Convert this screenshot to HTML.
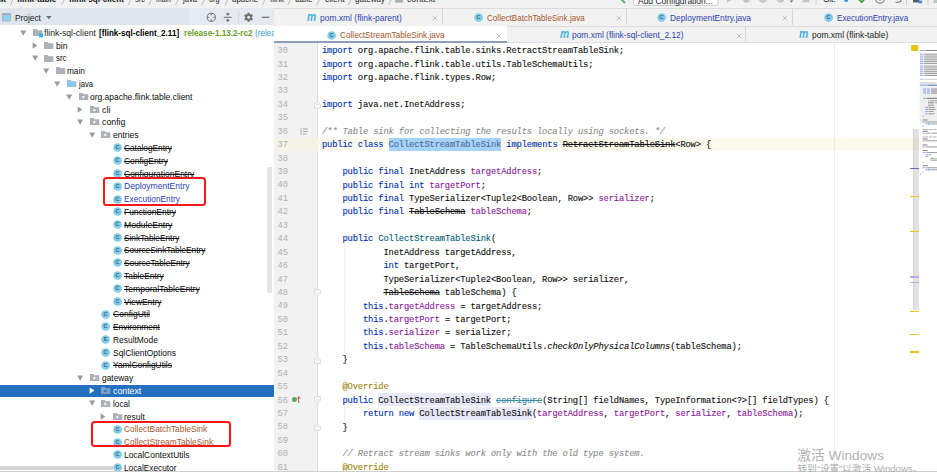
<!DOCTYPE html>
<html><head><meta charset="utf-8"><title>flink</title>
<style>
html,body{margin:0;padding:0}
body{width:937px;height:472px;overflow:hidden;position:relative;background:#fff;font-family:"Liberation Sans","Noto Sans CJK SC",sans-serif;font-size:9.6px;color:#1a1a1a}
.abs,.ic,.tl,.cl,.ln,.selrow,.curline{position:absolute}
.ic{overflow:visible}
#top{position:absolute;left:0;top:0;width:937px;height:8px;background:#f2f2f2;overflow:hidden}
#top .bc{position:absolute;top:-6.6px;font-size:9.4px;line-height:12px;white-space:nowrap;color:#262626;transform-origin:0 50%}
#top .bc.b{font-weight:bold;color:#111}
#phead{position:absolute;left:0;top:8.2px;width:274px;height:17.3px;background:#dfe4ed}
#tabs1{position:absolute;left:274px;top:8px;width:663px;height:17.5px;background:#f2f2f2;border-top:1px solid #dcdcdc;box-sizing:border-box}
#tabs2{position:absolute;left:274px;top:25.5px;width:663px;height:17.7px;background:#f2f2f2;border-top:1px solid #dcdcdc;border-bottom:1px solid #dedede;box-sizing:border-box}
.tab{position:absolute;white-space:nowrap;font-size:9px;line-height:12px;transform-origin:0 50%}
.tabm{position:absolute;font-size:12.6px;line-height:12px;font-style:italic;font-weight:bold;color:#3fb2e0;transform:scaleX(0.82);transform-origin:0 50%}
.tsep{position:absolute;width:1px;background:#d6d6d6}
.tx{position:absolute;font-size:9px;color:#b0b0b0;line-height:10px}
#tree{position:absolute;left:0;top:25.5px;width:274px;height:446.5px;background:#fff;overflow:hidden}
#treein{position:absolute;left:0;top:-25.5px;width:274px;height:472px}
.tl{white-space:nowrap;line-height:12.79px;height:12.79px;font-size:9px;color:#0c0c0c;transform:scaleX(0.947);transform-origin:0 50%}
.tl0{position:absolute;white-space:nowrap;line-height:12.79px;height:12.79px;font-size:9px;transform-origin:0 50%}
.tl.st{text-decoration:line-through;text-decoration-thickness:0.9px}
.tl.blue{color:#2a3fb8}
.tl.brown{color:#a8582a}
.tl.sel{color:#fff}
.tl b{font-weight:bold;color:#000}
.tl .rel{color:#6a9a2a;font-weight:bold}
.tl .relb{color:#3a9ad8}
.selrow{left:0;width:274px;background:#2470be}
#gutter{position:absolute;left:274px;top:43.2px;width:43.5px;height:428.8px;background:#f2f2f2;border-right:1px solid #dedede;box-sizing:border-box}
#editor{position:absolute;left:317.5px;top:43.2px;width:619.5px;height:428.8px;background:#fff}
.ln{left:277.6px;width:14px;margin-top:1.4px;font-family:"Liberation Mono",monospace;font-size:8.8px;letter-spacing:-0.16px;line-height:13.44px;color:#b0b0b0;white-space:pre}
.cl{left:322.0px;margin-top:1.5px;font-family:"Liberation Mono",monospace;font-size:8.8px;letter-spacing:-0.16px;-webkit-text-stroke:0.12px;line-height:13.44px;color:#111;white-space:pre;height:13.44px}
.cl .k{color:#0033b3}
.cl .f{color:#8e1a9c}
.cl .c{color:#8c8c8c;font-style:italic}
.cl .a{color:#9e880d}
.cl .m{color:#00627a}
.cl .s{text-decoration:line-through;text-decoration-thickness:0.65px}
.cl .hsel{color:#4f6f90}
.cl .hu{}
.hl{position:absolute}
.cl i{font-style:italic}
.curline{left:318px;width:601px;background:#fcfaed}
#wm1{position:absolute;left:797.3px;top:447.6px;font-size:13.7px;color:#b2b2b2;white-space:nowrap;line-height:16px}
#wm2{position:absolute;left:797.5px;top:462.6px;font-size:9.6px;color:#adadad;white-space:nowrap;line-height:12px}
</style></head><body>
<div id="top">
<span class="bc b" style="transform:scaleX(0.9854);left:-13.5px">flink</span>
<span class="bc b" style="transform:scaleX(0.8920);left:17.4px">flink-table</span>
<span class="bc b" style="transform:scaleX(0.8639);left:68.6px">flink-sql-client</span>
<span class="bc" style="transform:scaleX(0.8000);left:135.0px">src</span>
<span class="bc" style="transform:scaleX(0.7281);left:155.5px">main</span>
<span class="bc" style="transform:scaleX(0.8138);left:183.0px">java</span>
<span class="bc" style="transform:scaleX(0.7889);left:208.8px">org</span>
<span class="bc" style="transform:scaleX(0.8483);left:232.3px">apache</span>
<span class="bc" style="transform:scaleX(0.8397);left:270.0px">flink</span>
<span class="bc" style="transform:scaleX(0.8553);left:294.8px">table</span>
<span class="bc" style="transform:scaleX(0.8999);left:324.5px">client</span>
<span class="bc" style="transform:scaleX(0.8591);left:355.2px">gateway</span>
<span class="bc" style="transform:scaleX(0.9327);left:407.0px">context</span>
<svg class="ic" style="left:0;top:0" width="937" height="9" viewBox="0 0 937 9"><path d="M10.3 5 L13.3 -1" stroke="#b4b4b4" stroke-width="0.9" fill="none"/><path d="M61.6 5 L64.6 -1" stroke="#b4b4b4" stroke-width="0.9" fill="none"/><path d="M128.2 5 L131.2 -1" stroke="#b4b4b4" stroke-width="0.9" fill="none"/><path d="M148.8 5 L151.8 -1" stroke="#b4b4b4" stroke-width="0.9" fill="none"/><path d="M175.5 5 L178.5 -1" stroke="#b4b4b4" stroke-width="0.9" fill="none"/><path d="M201.8 5 L204.8 -1" stroke="#b4b4b4" stroke-width="0.9" fill="none"/><path d="M225.2 5 L228.2 -1" stroke="#b4b4b4" stroke-width="0.9" fill="none"/><path d="M262.3 5 L265.3 -1" stroke="#b4b4b4" stroke-width="0.9" fill="none"/><path d="M287.8 5 L290.8 -1" stroke="#b4b4b4" stroke-width="0.9" fill="none"/><path d="M316.8 5 L319.8 -1" stroke="#b4b4b4" stroke-width="0.9" fill="none"/><path d="M348.2 5 L351.2 -1" stroke="#b4b4b4" stroke-width="0.9" fill="none"/><path d="M388.6 5 L391.6 -1" stroke="#b4b4b4" stroke-width="0.9" fill="none"/><rect x="395" y="-2" width="8" height="4.6" fill="#aab1b8"/><path d="M621 -1 L625 3" stroke="#59a869" stroke-width="1.8"/><rect x="633.4" y="-8" width="84.6" height="13.4" rx="2" fill="#ffffff" stroke="#c4c4c4" stroke-width="0.9"/><path d="M727 -4 L732.5 -0.5 L727 2.6 Z" fill="#c2c2c2"/><ellipse cx="746.3" cy="-1" rx="3.4" ry="3.6" fill="#c2c2c2"/><path d="M759 -3 L767 -3 L767 1 L763 3.2 L759 1 Z" fill="#c8c8c8"/><circle cx="780.5" cy="-1.5" r="4.2" fill="#c8c8c8"/><path d="M789.5 0.4 H793.5 L791.5 2.6 Z" fill="#6e6e6e"/><rect x="802.6" y="-4" width="6.7" height="6.3" fill="#c6c6c6"/><path d="M816 -1 V5.2" stroke="#d0d0d0" stroke-width="1"/><path d="M844 -2 L848 -2 L848 1.8 L844.6 1.8 Z" fill="#3592e0"/><path d="M858.8 -0.6 L861.7 2.2 L864.8 -1.2" stroke="#4aa34a" stroke-width="1.8" fill="none"/><circle cx="880" cy="-1.2" r="4.4" fill="none" stroke="#6e6e6e" stroke-width="1.1"/><path d="M880 -3 V0.8" stroke="#6e6e6e" stroke-width="1"/><path d="M895.5 2.2 H898.5 Q901.4 2 901.4 -1.5" stroke="#6e6e6e" stroke-width="1.1" fill="none"/><path d="M906.5 -1 V5.2" stroke="#d0d0d0" stroke-width="1"/><rect x="913" y="-3" width="6.5" height="5.4" fill="#555b62"/><rect x="918.6" y="0.6" width="3.6" height="2.8" fill="#3592e0"/><path d="M928 -1 V5.2" stroke="#d0d0d0" stroke-width="1"/><rect x="933.5" y="-2" width="4" height="5" fill="#b8cbb8"/></svg>
<span class="bc" style="transform:scaleX(0.9026);left:638.4px;top:-4.8px;color:#222">Add Configuration...</span>
<span class="bc" style="transform:scaleX(0.8634);left:822.7px;top:-6.8px;color:#222">Git:</span>
</div>
<div id="phead"></div>
<div class="abs" style="left:189px;top:8.2px;width:85px;height:17.3px;background:#e5e9f1"></div>
<svg class="ic" style="left:2.1px;top:13.4px" width="9" height="9" viewBox="0 0 9 9"><rect x="0.4" y="0.4" width="8" height="7.6" fill="#8fd2f2" stroke="#a3adb8" stroke-width="0.8"/><rect x="0.4" y="0.4" width="8" height="1.8" fill="#a3adb8"/></svg>
<div class="abs" style="transform:scaleX(0.9245);transform-origin:0 50%;left:14.7px;top:11.8px;font-size:9px;line-height:12px;color:#1c1c1c;white-space:nowrap">Project</div>
<svg class="ic" style="left:46.1px;top:16.4px" width="6" height="4" viewBox="0 0 6 4"><path d="M0 0.1 H5.7 L2.85 3.3 Z" fill="#707070"/></svg>
<svg class="ic" style="left:0;top:0" width="280" height="30" viewBox="0 0 280 30">
 <circle cx="211.3" cy="17.3" r="4.1" fill="none" stroke="#6e6e6e" stroke-width="0.95"/>
 <path d="M211.3 13.2 V15.4 M211.3 19.2 V21.4 M207.2 17.3 H209.4 M213.2 17.3 H215.4" stroke="#6e6e6e" stroke-width="0.95"/>
 <path d="M223.8 17.3 H231.7" stroke="#6e6e6e" stroke-width="1"/>
 <path d="M225.7 13.5 H229.9 L227.8 15.8 Z M225.7 21.1 H229.9 L227.8 18.8 Z" fill="#6e6e6e"/>
 <path d="M227.8 12.6 V14 M227.8 20.6 V22" stroke="#6e6e6e" stroke-width="0.9"/>
 <path d="M238.7 11.2 V23.3" stroke="#cdd3dc" stroke-width="0.9"/>
 <rect x="247.45" y="12.80" width="2.3" height="9" rx="0.3" transform="rotate(0 248.6 17.3)" fill="#6e6e6e"/><rect x="247.45" y="12.80" width="2.3" height="9" rx="0.3" transform="rotate(60 248.6 17.3)" fill="#6e6e6e"/><rect x="247.45" y="12.80" width="2.3" height="9" rx="0.3" transform="rotate(120 248.6 17.3)" fill="#6e6e6e"/><circle cx="248.6" cy="17.3" r="3.2" fill="#6e6e6e"/><circle cx="248.6" cy="17.3" r="1.5" fill="#e5e9f1"/>
 <path d="M261.8 17.3 H269.4" stroke="#6e6e6e" stroke-width="1.2"/>
</svg>
<div id="tabs1"></div>
<div id="tabs2"></div>
<div class="abs" style="left:274px;top:26px;width:232.5px;height:15.5px;background:#fff"></div>
<div class="abs" style="left:274px;top:41.3px;width:232.5px;height:2px;background:#8c9dbe;z-index:3"></div>
<div class="tsep" style="left:442px;top:9px;height:16px"></div>
<div class="tsep" style="left:625.5px;top:9px;height:16px"></div>
<div class="tsep" style="left:791.5px;top:9px;height:16px"></div>
<div class="tsep" style="left:745px;top:26px;height:16px"></div>
<div class="tsep" style="left:273.4px;top:8px;height:464px;background:#e6e6e6"></div>

<span class="tabm" style="left:307.4px;top:11.0px">m</span><span class="tab" style="transform:scaleX(0.9399);left:319.7px;top:11.9px;color:#2b3fb0">pom.xml (flink-parent)</span>
<svg class="ic" style="left:432.0px;top:15.2px" width="6" height="6" viewBox="0 0 6 6"><path d="M0.6 0.6 L5.4 5.4 M5.4 0.6 L0.6 5.4" stroke="#b4b4b4" stroke-width="0.8"/></svg>
<svg class="ic" style="left:474.2px;top:12.4px" width="11" height="11" viewBox="0 0 11 11"><circle cx="4.6" cy="5.5" r="4.35" fill="#7fcdea"/><text x="4.6" y="7.45" font-size="5.6" font-weight="bold" text-anchor="middle" fill="#4a6472" font-family="Liberation Sans, sans-serif">C</text></svg><span class="tab" style="transform:scaleX(0.9009);left:486.7px;top:11.9px;color:#a5562a">CollectBatchTableSink.java</span>
<svg class="ic" style="left:615.7px;top:15.2px" width="6" height="6" viewBox="0 0 6 6"><path d="M0.6 0.6 L5.4 5.4 M5.4 0.6 L0.6 5.4" stroke="#b4b4b4" stroke-width="0.8"/></svg>
<svg class="ic" style="left:657.0px;top:12.4px" width="11" height="11" viewBox="0 0 11 11"><circle cx="4.6" cy="5.5" r="4.35" fill="#7fcdea"/><text x="4.6" y="7.45" font-size="5.6" font-weight="bold" text-anchor="middle" fill="#4a6472" font-family="Liberation Sans, sans-serif">C</text></svg><span class="tab" style="transform:scaleX(0.9270);left:670.0px;top:11.9px;color:#2b3fb0">DeploymentEntry.java</span>
<svg class="ic" style="left:782.0px;top:15.2px" width="6" height="6" viewBox="0 0 6 6"><path d="M0.6 0.6 L5.4 5.4 M5.4 0.6 L0.6 5.4" stroke="#b4b4b4" stroke-width="0.8"/></svg>
<svg class="ic" style="left:824.3px;top:12.4px" width="11" height="11" viewBox="0 0 11 11"><circle cx="4.6" cy="5.5" r="4.35" fill="#7fcdea"/><text x="4.6" y="7.45" font-size="5.6" font-weight="bold" text-anchor="middle" fill="#4a6472" font-family="Liberation Sans, sans-serif">C</text></svg><span class="tab" style="transform:scaleX(0.9027);left:837.4px;top:11.9px;color:#2b3fb0">ExecutionEntry.java</span>
<svg class="ic" style="left:327.4px;top:29.7px" width="11" height="11" viewBox="0 0 11 11"><circle cx="4.6" cy="5.5" r="4.35" fill="#7fcdea"/><text x="4.6" y="7.45" font-size="5.6" font-weight="bold" text-anchor="middle" fill="#4a6472" font-family="Liberation Sans, sans-serif">C</text></svg><span class="tab" style="transform:scaleX(0.9130);left:340.2px;top:29.2px;color:#a5562a">CollectStreamTableSink.java</span>
<svg class="ic" style="left:495.6px;top:32.5px" width="6" height="6" viewBox="0 0 6 6"><path d="M0.6 0.6 L5.4 5.4 M5.4 0.6 L0.6 5.4" stroke="#b4b4b4" stroke-width="0.8"/></svg>
<span class="tabm" style="left:559.5px;top:28.3px">m</span><span class="tab" style="transform:scaleX(0.9335);left:571.8px;top:29.2px;color:#2b3fb0">pom.xml (flink-sql-client_2.12)</span>
<svg class="ic" style="left:735.5px;top:32.5px" width="6" height="6" viewBox="0 0 6 6"><path d="M0.6 0.6 L5.4 5.4 M5.4 0.6 L0.6 5.4" stroke="#b4b4b4" stroke-width="0.8"/></svg>
<span class="tabm" style="left:799.0px;top:28.3px">m</span><span class="tab" style="transform:scaleX(0.9416);left:811.5px;top:29.2px;color:#222">pom.xml (flink-table)</span>


<div id="tree"><div id="treein">
<svg class="ic" style="left:20.1px;top:29.5px" width="7" height="7" viewBox="0 0 7 7"><path d="M0.2 0.6 H6.2 L3.2 5.8 Z" fill="#9a9a9a"/></svg>
<svg class="ic" style="left:33.0px;top:27.9px" width="12" height="11" viewBox="0 0 12 11"><path d="M0 1.1 H3.6 L4.6 2.2 H9.3 V7.9 H0 Z" fill="#aab1b8"/><rect x="6" y="5.4" width="4" height="4" fill="#35b3e8"/></svg>
<div class="tl0" style="transform:scaleX(0.9502);left:44.3px;top:26.91px;color:#1c1c1c">flink-sql-client</div>
<div class="tl0" style="transform:scaleX(0.8997);left:99.1px;top:26.91px;font-weight:bold;color:#000">[flink-sql-client_2.11]</div>
<div class="tl0" style="transform:scaleX(0.9079);left:183.7px;top:26.91px;font-weight:bold;color:#6a9c2c">release-1.13.2-rc2</div>
<div class="tl0" style="transform:scaleX(0.9047);left:254.7px;top:26.91px;color:#3a9ad8">(release-1.13.2-rc2)</div>
<svg class="ic" style="left:31.6px;top:41.9px" width="7" height="8" viewBox="0 0 7 8"><path d="M0.6 0.4 L5.4 3.6 L0.6 6.8 Z" fill="#9a9a9a"/></svg>
<svg class="ic" style="left:44.4px;top:40.7px" width="12" height="11" viewBox="0 0 12 11"><path d="M0 1.1 H3.6 L4.6 2.2 H9.3 V7.9 H0 Z" fill="#aab1b8"/></svg>
<div class="tl" style="transform:scaleX(0.9571);left:56.0px;top:39.70px">bin</div>
<svg class="ic" style="left:31.5px;top:55.1px" width="7" height="7" viewBox="0 0 7 7"><path d="M0.2 0.6 H6.2 L3.2 5.8 Z" fill="#9a9a9a"/></svg>
<svg class="ic" style="left:44.4px;top:53.5px" width="12" height="11" viewBox="0 0 12 11"><path d="M0 1.1 H3.6 L4.6 2.2 H9.3 V7.9 H0 Z" fill="#aab1b8"/></svg>
<div class="tl" style="transform:scaleX(0.8667);left:56.0px;top:52.49px">src</div>
<svg class="ic" style="left:42.9px;top:67.9px" width="7" height="7" viewBox="0 0 7 7"><path d="M0.2 0.6 H6.2 L3.2 5.8 Z" fill="#9a9a9a"/></svg>
<svg class="ic" style="left:55.8px;top:66.3px" width="12" height="11" viewBox="0 0 12 11"><path d="M0 1.1 H3.6 L4.6 2.2 H9.3 V7.9 H0 Z" fill="#aab1b8"/></svg>
<div class="tl" style="transform:scaleX(0.9121);left:67.4px;top:65.27px">main</div>
<svg class="ic" style="left:54.3px;top:80.7px" width="7" height="7" viewBox="0 0 7 7"><path d="M0.2 0.6 H6.2 L3.2 5.8 Z" fill="#9a9a9a"/></svg>
<svg class="ic" style="left:67.2px;top:79.1px" width="12" height="11" viewBox="0 0 12 11"><path d="M0 1.1 H3.6 L4.6 2.2 H9.3 V7.9 H0 Z" fill="#8fc4e6"/></svg>
<div class="tl" style="transform:scaleX(0.8537);left:78.8px;top:78.06px">java</div>
<svg class="ic" style="left:65.7px;top:93.5px" width="7" height="7" viewBox="0 0 7 7"><path d="M0.2 0.6 H6.2 L3.2 5.8 Z" fill="#9a9a9a"/></svg>
<svg class="ic" style="left:78.6px;top:91.9px" width="12" height="11" viewBox="0 0 12 11"><path d="M0 1.1 H3.6 L4.6 2.2 H9.3 V7.9 H0 Z" fill="#aab1b8"/><rect x="3.2" y="4" width="2.2" height="2.1" fill="#f4f5f6"/></svg>
<div class="tl" style="transform:scaleX(0.9388);left:90.2px;top:90.86px">org.apache.flink.table.client</div>
<svg class="ic" style="left:77.2px;top:105.8px" width="7" height="8" viewBox="0 0 7 8"><path d="M0.6 0.4 L5.4 3.6 L0.6 6.8 Z" fill="#9a9a9a"/></svg>
<svg class="ic" style="left:90.0px;top:104.6px" width="12" height="11" viewBox="0 0 12 11"><path d="M0 1.1 H3.6 L4.6 2.2 H9.3 V7.9 H0 Z" fill="#aab1b8"/><rect x="3.2" y="4" width="2.2" height="2.1" fill="#f4f5f6"/></svg>
<div class="tl" style="transform:scaleX(0.9882);left:101.6px;top:103.64px">cli</div>
<svg class="ic" style="left:77.1px;top:119.0px" width="7" height="7" viewBox="0 0 7 7"><path d="M0.2 0.6 H6.2 L3.2 5.8 Z" fill="#9a9a9a"/></svg>
<svg class="ic" style="left:90.0px;top:117.4px" width="12" height="11" viewBox="0 0 12 11"><path d="M0 1.1 H3.6 L4.6 2.2 H9.3 V7.9 H0 Z" fill="#aab1b8"/><rect x="3.2" y="4" width="2.2" height="2.1" fill="#f4f5f6"/></svg>
<div class="tl" style="transform:scaleX(0.9737);left:101.6px;top:116.44px">config</div>
<svg class="ic" style="left:88.5px;top:131.8px" width="7" height="7" viewBox="0 0 7 7"><path d="M0.2 0.6 H6.2 L3.2 5.8 Z" fill="#9a9a9a"/></svg>
<svg class="ic" style="left:101.4px;top:130.2px" width="12" height="11" viewBox="0 0 12 11"><path d="M0 1.1 H3.6 L4.6 2.2 H9.3 V7.9 H0 Z" fill="#aab1b8"/><rect x="3.2" y="4" width="2.2" height="2.1" fill="#f4f5f6"/></svg>
<div class="tl" style="transform:scaleX(0.9439);left:113.0px;top:129.22px">entries</div>
<svg class="ic" style="left:112.8px;top:142.3px" width="11" height="11" viewBox="0 0 11 11"><circle cx="4.6" cy="5.5" r="4.35" fill="#7fcdea"/><text x="4.6" y="7.45" font-size="5.6" font-weight="bold" text-anchor="middle" fill="#4a6472" font-family="Liberation Sans, sans-serif">C</text></svg>
<div class="tl st" style="transform:scaleX(0.9206);left:124.4px;top:142.01px">CatalogEntry</div>
<svg class="ic" style="left:112.8px;top:155.1px" width="11" height="11" viewBox="0 0 11 11"><circle cx="4.6" cy="5.5" r="4.35" fill="#7fcdea"/><text x="4.6" y="7.45" font-size="5.6" font-weight="bold" text-anchor="middle" fill="#4a6472" font-family="Liberation Sans, sans-serif">C</text></svg>
<div class="tl st" style="transform:scaleX(0.9334);left:124.4px;top:154.80px">ConfigEntry</div>
<svg class="ic" style="left:112.8px;top:167.9px" width="11" height="11" viewBox="0 0 11 11"><circle cx="4.6" cy="5.5" r="4.35" fill="#7fcdea"/><text x="4.6" y="7.45" font-size="5.6" font-weight="bold" text-anchor="middle" fill="#4a6472" font-family="Liberation Sans, sans-serif">C</text></svg>
<div class="tl st" style="transform:scaleX(0.9430);left:124.4px;top:167.59px">ConfigurationEntry</div>
<svg class="ic" style="left:112.8px;top:180.7px" width="11" height="11" viewBox="0 0 11 11"><circle cx="4.6" cy="5.5" r="4.35" fill="#7fcdea"/><text x="4.6" y="7.45" font-size="5.6" font-weight="bold" text-anchor="middle" fill="#4a6472" font-family="Liberation Sans, sans-serif">C</text></svg>
<div class="tl blue" style="transform:scaleX(0.9488);left:124.4px;top:180.38px">DeploymentEntry</div>
<svg class="ic" style="left:112.8px;top:193.5px" width="11" height="11" viewBox="0 0 11 11"><circle cx="4.6" cy="5.5" r="4.35" fill="#7fcdea"/><text x="4.6" y="7.45" font-size="5.6" font-weight="bold" text-anchor="middle" fill="#4a6472" font-family="Liberation Sans, sans-serif">C</text></svg>
<div class="tl blue" style="transform:scaleX(0.9251);left:124.4px;top:193.17px">ExecutionEntry</div>
<svg class="ic" style="left:112.8px;top:206.3px" width="11" height="11" viewBox="0 0 11 11"><circle cx="4.6" cy="5.5" r="4.35" fill="#7fcdea"/><text x="4.6" y="7.45" font-size="5.6" font-weight="bold" text-anchor="middle" fill="#4a6472" font-family="Liberation Sans, sans-serif">C</text></svg>
<div class="tl st" style="transform:scaleX(0.9364);left:124.4px;top:205.96px">FunctionEntry</div>
<svg class="ic" style="left:112.8px;top:219.1px" width="11" height="11" viewBox="0 0 11 11"><circle cx="4.6" cy="5.5" r="4.35" fill="#7fcdea"/><text x="4.6" y="7.45" font-size="5.6" font-weight="bold" text-anchor="middle" fill="#4a6472" font-family="Liberation Sans, sans-serif">C</text></svg>
<div class="tl st" style="transform:scaleX(0.9578);left:124.4px;top:218.75px">ModuleEntry</div>
<svg class="ic" style="left:112.8px;top:231.8px" width="11" height="11" viewBox="0 0 11 11"><circle cx="4.6" cy="5.5" r="4.35" fill="#7fcdea"/><text x="4.6" y="7.45" font-size="5.6" font-weight="bold" text-anchor="middle" fill="#4a6472" font-family="Liberation Sans, sans-serif">C</text></svg>
<div class="tl st" style="transform:scaleX(0.9212);left:124.4px;top:231.54px">SinkTableEntry</div>
<svg class="ic" style="left:112.8px;top:244.6px" width="11" height="11" viewBox="0 0 11 11"><circle cx="4.6" cy="5.5" r="4.35" fill="#7fcdea"/><text x="4.6" y="7.45" font-size="5.6" font-weight="bold" text-anchor="middle" fill="#4a6472" font-family="Liberation Sans, sans-serif">C</text></svg>
<div class="tl st" style="transform:scaleX(0.9193);left:124.4px;top:244.33px">SourceSinkTableEntry</div>
<svg class="ic" style="left:112.8px;top:257.4px" width="11" height="11" viewBox="0 0 11 11"><circle cx="4.6" cy="5.5" r="4.35" fill="#7fcdea"/><text x="4.6" y="7.45" font-size="5.6" font-weight="bold" text-anchor="middle" fill="#4a6472" font-family="Liberation Sans, sans-serif">C</text></svg>
<div class="tl st" style="transform:scaleX(0.9261);left:124.4px;top:257.12px">SourceTableEntry</div>
<svg class="ic" style="left:112.8px;top:270.2px" width="11" height="11" viewBox="0 0 11 11"><circle cx="4.6" cy="5.5" r="4.35" fill="#7fcdea"/><text x="4.6" y="7.45" font-size="5.6" font-weight="bold" text-anchor="middle" fill="#4a6472" font-family="Liberation Sans, sans-serif">C</text></svg>
<div class="tl st" style="transform:scaleX(0.9358);left:124.4px;top:269.92px">TableEntry</div>
<svg class="ic" style="left:112.8px;top:283.0px" width="11" height="11" viewBox="0 0 11 11"><circle cx="4.6" cy="5.5" r="4.35" fill="#7fcdea"/><text x="4.6" y="7.45" font-size="5.6" font-weight="bold" text-anchor="middle" fill="#4a6472" font-family="Liberation Sans, sans-serif">C</text></svg>
<div class="tl st" style="transform:scaleX(0.9516);left:124.4px;top:282.71px">TemporalTableEntry</div>
<svg class="ic" style="left:112.8px;top:295.8px" width="11" height="11" viewBox="0 0 11 11"><circle cx="4.6" cy="5.5" r="4.35" fill="#7fcdea"/><text x="4.6" y="7.45" font-size="5.6" font-weight="bold" text-anchor="middle" fill="#4a6472" font-family="Liberation Sans, sans-serif">C</text></svg>
<div class="tl st" style="transform:scaleX(0.9267);left:124.4px;top:295.50px">ViewEntry</div>
<svg class="ic" style="left:101.4px;top:308.6px" width="11" height="11" viewBox="0 0 11 11"><circle cx="4.6" cy="5.5" r="4.35" fill="#7fcdea"/><text x="4.6" y="7.45" font-size="5.6" font-weight="bold" text-anchor="middle" fill="#4a6472" font-family="Liberation Sans, sans-serif">C</text></svg>
<div class="tl st" style="transform:scaleX(0.9483);left:113.0px;top:308.29px">ConfigUtil</div>
<svg class="ic" style="left:101.4px;top:321.4px" width="11" height="11" viewBox="0 0 11 11"><circle cx="4.6" cy="5.5" r="4.35" fill="#7fcdea"/><text x="4.6" y="7.45" font-size="5.6" font-weight="bold" text-anchor="middle" fill="#4a6472" font-family="Liberation Sans, sans-serif">C</text></svg>
<div class="tl st" style="transform:scaleX(0.9281);left:113.0px;top:321.07px">Environment</div>
<svg class="ic" style="left:101.4px;top:334.2px" width="11" height="11" viewBox="0 0 11 11"><circle cx="4.6" cy="5.5" r="4.35" fill="#7fcdea"/><text x="4.6" y="7.45" font-size="5.6" font-weight="bold" text-anchor="middle" fill="#4a6472" font-family="Liberation Sans, sans-serif">E</text></svg>
<div class="tl" style="transform:scaleX(0.9348);left:113.0px;top:333.87px">ResultMode</div>
<svg class="ic" style="left:101.4px;top:346.9px" width="11" height="11" viewBox="0 0 11 11"><circle cx="4.6" cy="5.5" r="4.35" fill="#7fcdea"/><text x="4.6" y="7.45" font-size="5.6" font-weight="bold" text-anchor="middle" fill="#4a6472" font-family="Liberation Sans, sans-serif">C</text></svg>
<div class="tl" style="transform:scaleX(0.9381);left:113.0px;top:346.66px">SqlClientOptions</div>
<svg class="ic" style="left:101.4px;top:359.7px" width="11" height="11" viewBox="0 0 11 11"><circle cx="4.6" cy="5.5" r="4.35" fill="#7fcdea"/><text x="4.6" y="7.45" font-size="5.6" font-weight="bold" text-anchor="middle" fill="#4a6472" font-family="Liberation Sans, sans-serif">C</text></svg>
<div class="tl st" style="transform:scaleX(0.9296);left:113.0px;top:359.44px">YamlConfigUtils</div>
<svg class="ic" style="left:77.1px;top:374.8px" width="7" height="7" viewBox="0 0 7 7"><path d="M0.2 0.6 H6.2 L3.2 5.8 Z" fill="#9a9a9a"/></svg>
<svg class="ic" style="left:90.0px;top:373.2px" width="12" height="11" viewBox="0 0 12 11"><path d="M0 1.1 H3.6 L4.6 2.2 H9.3 V7.9 H0 Z" fill="#aab1b8"/><rect x="3.2" y="4" width="2.2" height="2.1" fill="#f4f5f6"/></svg>
<div class="tl" style="transform:scaleX(0.9305);left:101.6px;top:372.24px">gateway</div>
<div class="selrow" style="top:384.8px;height:12.2px"></div>
<svg class="ic" style="left:88.6px;top:387.2px" width="7" height="8" viewBox="0 0 7 8"><path d="M0.6 0.4 L5.4 3.6 L0.6 6.8 Z" fill="#ffffff"/></svg>
<svg class="ic" style="left:101.4px;top:386.0px" width="12" height="11" viewBox="0 0 12 11"><path d="M0 1.1 H3.6 L4.6 2.2 H9.3 V7.9 H0 Z" fill="#7f9fc4"/><rect x="3.2" y="4" width="2.2" height="2.1" fill="#2a74bd"/></svg>
<div class="tl sel" style="transform:scaleX(0.9748);left:113.0px;top:385.03px">context</div>
<svg class="ic" style="left:88.5px;top:400.4px" width="7" height="7" viewBox="0 0 7 7"><path d="M0.2 0.6 H6.2 L3.2 5.8 Z" fill="#9a9a9a"/></svg>
<svg class="ic" style="left:101.4px;top:398.8px" width="12" height="11" viewBox="0 0 12 11"><path d="M0 1.1 H3.6 L4.6 2.2 H9.3 V7.9 H0 Z" fill="#aab1b8"/><rect x="3.2" y="4" width="2.2" height="2.1" fill="#f4f5f6"/></svg>
<div class="tl" style="transform:scaleX(0.9127);left:113.0px;top:397.81px">local</div>
<svg class="ic" style="left:100.0px;top:412.8px" width="7" height="8" viewBox="0 0 7 8"><path d="M0.6 0.4 L5.4 3.6 L0.6 6.8 Z" fill="#9a9a9a"/></svg>
<svg class="ic" style="left:112.8px;top:411.6px" width="12" height="11" viewBox="0 0 12 11"><path d="M0 1.1 H3.6 L4.6 2.2 H9.3 V7.9 H0 Z" fill="#aab1b8"/><rect x="3.2" y="4" width="2.2" height="2.1" fill="#f4f5f6"/></svg>
<div class="tl" style="transform:scaleX(0.9448);left:124.4px;top:410.61px">result</div>
<svg class="ic" style="left:112.8px;top:423.7px" width="11" height="11" viewBox="0 0 11 11"><circle cx="4.6" cy="5.5" r="4.35" fill="#7fcdea"/><text x="4.6" y="7.45" font-size="5.6" font-weight="bold" text-anchor="middle" fill="#4a6472" font-family="Liberation Sans, sans-serif">C</text></svg>
<div class="tl brown" style="transform:scaleX(0.9290);left:124.4px;top:423.39px">CollectBatchTableSink</div>
<svg class="ic" style="left:112.8px;top:436.5px" width="11" height="11" viewBox="0 0 11 11"><circle cx="4.6" cy="5.5" r="4.35" fill="#7fcdea"/><text x="4.6" y="7.45" font-size="5.6" font-weight="bold" text-anchor="middle" fill="#4a6472" font-family="Liberation Sans, sans-serif">C</text></svg>
<div class="tl brown" style="transform:scaleX(0.9325);left:124.4px;top:436.19px">CollectStreamTableSink</div>
<svg class="ic" style="left:112.8px;top:449.3px" width="11" height="11" viewBox="0 0 11 11"><circle cx="4.6" cy="5.5" r="4.35" fill="#7fcdea"/><text x="4.6" y="7.45" font-size="5.6" font-weight="bold" text-anchor="middle" fill="#4a6472" font-family="Liberation Sans, sans-serif">C</text></svg>
<div class="tl" style="transform:scaleX(0.9353);left:124.4px;top:448.98px">LocalContextUtils</div>
<svg class="ic" style="left:112.8px;top:462.1px" width="11" height="11" viewBox="0 0 11 11"><circle cx="4.6" cy="5.5" r="4.35" fill="#7fcdea"/><text x="4.6" y="7.45" font-size="5.6" font-weight="bold" text-anchor="middle" fill="#4a6472" font-family="Liberation Sans, sans-serif">C</text></svg>
<div class="tl" style="transform:scaleX(0.9203);left:124.4px;top:461.76px">LocalExecutor</div>
<div class="abs" style="left:102.8px;top:176.9px;width:103.5px;height:28.9px;border:2px solid #f81818;border-radius:3.5px;box-sizing:border-box"></div>
<div class="abs" style="left:90.6px;top:421.1px;width:140.5px;height:25.6px;border:2px solid #f81818;border-radius:3.5px;box-sizing:border-box"></div>
<div class="abs" style="left:267.3px;top:167.2px;width:5px;height:126px;background:#e5e5e5"></div>
<div class="abs" style="left:0;top:465.5px;width:113px;height:4.5px;background:#d2d2d2"></div>
</div></div>

<div id="gutter"></div>
<div id="editor"></div>
<div class="ln" style="top:43.70px">30</div>
<div class="cl" style="top:43.70px"><span class="k">import</span> org.apache.flink.table.sinks.RetractStreamTableSink;</div>
<div class="ln" style="top:57.14px">31</div>
<div class="cl" style="top:57.14px"><span class="k">import</span> org.apache.flink.table.utils.TableSchemaUtils;</div>
<div class="ln" style="top:70.58px">32</div>
<div class="cl" style="top:70.58px"><span class="k">import</span> org.apache.flink.types.Row;</div>
<div class="ln" style="top:84.02px">33</div>
<div class="ln" style="top:97.46px">34</div>
<div class="cl" style="top:97.46px"><span class="k">import</span> java.net.InetAddress;</div>
<div class="ln" style="top:110.90px">35</div>
<div class="ln" style="top:124.34px">36</div>
<div class="cl" style="top:124.34px"><span class="c">/** Table sink for collecting the results locally using sockets. */</span></div>
<div class="curline" style="top:137.78px;height:13.44px"></div>
<div class="abs" style="left:274.5px;width:43px;background:#f6f4e9;top:137.78px;height:13.44px"></div>
<div class="hl" style="left:388.6px;top:138.08px;width:112.6px;height:13.04px;background:#a6d2ff"></div>
<div class="ln" style="top:137.78px">37</div>
<div class="cl" style="top:137.78px"><span class="k">public class</span> <span class="hsel">CollectStreamTableSink</span> <span class="k">implements</span> <span class="s">RetractStreamTableSink</span>&lt;Row&gt; {</div>
<div class="ln" style="top:151.22px">38</div>
<div class="ln" style="top:164.66px">39</div>
<div class="cl" style="top:164.66px">    <span class="k">public final</span> InetAddress <span class="f">targetAddress</span>;</div>
<div class="ln" style="top:178.10px">40</div>
<div class="cl" style="top:178.10px">    <span class="k">public final int</span> <span class="f">targetPort</span>;</div>
<div class="ln" style="top:191.54px">41</div>
<div class="cl" style="top:191.54px">    <span class="k">public final</span> TypeSerializer&lt;Tuple2&lt;Boolean, Row&gt;&gt; <span class="f">serializer</span>;</div>
<div class="ln" style="top:204.98px">42</div>
<div class="cl" style="top:204.98px">    <span class="k">public final</span> <span class="s">TableSchema</span> <span class="f">tableSchema</span>;</div>
<div class="ln" style="top:218.42px">43</div>
<div class="ln" style="top:231.86px">44</div>
<div class="cl" style="top:231.86px">    <span class="k">public</span> <span class="m">CollectStreamTableSink</span>(</div>
<div class="ln" style="top:245.30px">45</div>
<div class="cl" style="top:245.30px">            InetAddress targetAddress,</div>
<div class="ln" style="top:258.74px">46</div>
<div class="cl" style="top:258.74px">            <span class="k">int</span> targetPort,</div>
<div class="ln" style="top:272.18px">47</div>
<div class="cl" style="top:272.18px">            TypeSerializer&lt;Tuple2&lt;Boolean, Row&gt;&gt; serializer,</div>
<div class="ln" style="top:285.62px">48</div>
<div class="cl" style="top:285.62px">            <span class="s">TableSchema</span> tableSchema) {</div>
<div class="ln" style="top:299.06px">49</div>
<div class="cl" style="top:299.06px">        <span class="k">this</span>.<span class="f">targetAddress</span> = targetAddress;</div>
<div class="ln" style="top:312.50px">50</div>
<div class="cl" style="top:312.50px">        <span class="k">this</span>.<span class="f">targetPort</span> = targetPort;</div>
<div class="ln" style="top:325.94px">51</div>
<div class="cl" style="top:325.94px">        <span class="k">this</span>.<span class="f">serializer</span> = serializer;</div>
<div class="ln" style="top:339.38px">52</div>
<div class="cl" style="top:339.38px">        <span class="k">this</span>.<span class="f">tableSchema</span> = TableSchemaUtils.<i>checkOnlyPhysicalColumns</i>(tableSchema);</div>
<div class="ln" style="top:352.82px">53</div>
<div class="cl" style="top:352.82px">    }</div>
<div class="ln" style="top:366.26px">54</div>
<div class="ln" style="top:379.70px">55</div>
<div class="cl" style="top:379.70px">    <span class="a">@Override</span></div>
<div class="hl" style="left:378.3px;top:393.44px;width:112.6px;height:13.04px;background:#e8e8fb"></div>
<div class="ln" style="top:393.14px">56</div>
<div class="cl" style="top:393.14px">    <span class="k">public</span> <span class="hu">CollectStreamTableSink</span> <span class="m s" style="color:#3b8ea5">configure</span>(String[] fieldNames, TypeInformation&lt;?&gt;[] fieldTypes) {</div>
<div class="hl" style="left:419.3px;top:406.88px;width:112.6px;height:13.04px;background:#e8e8fb"></div>
<div class="ln" style="top:406.58px">57</div>
<div class="cl" style="top:406.58px">        <span class="k">return new</span> <span class="hu">CollectStreamTableSink</span>(<span class="f">targetAddress</span>, <span class="f">targetPort</span>, <span class="f">serializer</span>, <span class="f">tableSchema</span>);</div>
<div class="ln" style="top:420.02px">58</div>
<div class="cl" style="top:420.02px">    }</div>
<div class="ln" style="top:433.46px">59</div>
<div class="ln" style="top:446.90px">60</div>
<div class="cl" style="top:446.90px">    <span class="c">// Retract stream sinks work only with the old type system.</span></div>
<div class="ln" style="top:460.34px">61</div>
<div class="cl" style="top:460.34px">    <span class="a">@Override</span></div>
<svg class="ic" style="left:313.8px;top:100.6px" width="7" height="8" viewBox="0 0 7 7.5"><path d="M0.6 6.9 H6.4 V3.3 L3.5 0.6 L0.6 3.3 Z" fill="#fff" stroke="#cdcdcd" stroke-width="0.8"/><path d="M2.2 3.7 H4.8" stroke="#c0c0c0" stroke-width="0.7"/></svg>
<svg class="ic" style="left:313.8px;top:288.7px" width="7" height="8" viewBox="0 0 7 7.5"><path d="M0.6 0.6 H6.4 V4.2 L3.5 6.9 L0.6 4.2 Z" fill="#fff" stroke="#cdcdcd" stroke-width="0.8"/><path d="M2.2 3.7 H4.8" stroke="#c0c0c0" stroke-width="0.7"/></svg>
<svg class="ic" style="left:313.8px;top:355.9px" width="7" height="8" viewBox="0 0 7 7.5"><path d="M0.6 6.9 H6.4 V3.3 L3.5 0.6 L0.6 3.3 Z" fill="#fff" stroke="#cdcdcd" stroke-width="0.8"/><path d="M2.2 3.7 H4.8" stroke="#c0c0c0" stroke-width="0.7"/></svg>
<svg class="ic" style="left:313.8px;top:396.3px" width="7" height="8" viewBox="0 0 7 7.5"><path d="M0.6 0.6 H6.4 V4.2 L3.5 6.9 L0.6 4.2 Z" fill="#fff" stroke="#cdcdcd" stroke-width="0.8"/><path d="M2.2 3.7 H4.8" stroke="#c0c0c0" stroke-width="0.7"/></svg>
<svg class="ic" style="left:313.8px;top:423.1px" width="7" height="8" viewBox="0 0 7 7.5"><path d="M0.6 6.9 H6.4 V3.3 L3.5 0.6 L0.6 3.3 Z" fill="#fff" stroke="#cdcdcd" stroke-width="0.8"/><path d="M2.2 3.7 H4.8" stroke="#c0c0c0" stroke-width="0.7"/></svg>
<div class="abs" style="left:343.7px;top:245.3px;width:1px;height:107.5px;background:#ebebeb"></div>
<div class="abs" style="left:343.7px;top:406.6px;width:1px;height:13.4px;background:#ebebeb"></div>
<svg class="ic" style="left:300px;top:127.6px" width="9" height="7" viewBox="0 0 9 7"><path d="M1 0.5 V6.5 M3 1 H8 M3 3.5 H8 M3 6 H6.5" stroke="#9aa0a6" stroke-width="0.9" fill="none"/></svg>
<svg class="ic" style="left:291px;top:395.4px" width="10" height="9" viewBox="0 0 10 9"><circle cx="3.4" cy="4.6" r="2.5" fill="#5aa85a"/><path d="M7.6 8 V2.2 M6 3.6 L7.6 1.6 L9.2 3.6" stroke="#d0504a" stroke-width="1" fill="none"/></svg>
<div class="abs" style="left:833.5px;top:43.5px;width:1px;height:428.5px;background:#ebebeb"></div>
<div class="abs" style="left:911.4px;top:44.6px;width:6.6px;height:6.6px;background:#ebc216"></div>
<div class="abs" style="left:913.2px;top:128.7px;width:5.8px;height:181.3px;background:rgba(0,0,0,0.115);border-left:0.6px solid rgba(0,0,0,0.06);box-sizing:border-box"></div>
<div class="abs" style="left:910.2px;top:167.5px;width:8.8px;height:1.4px;background:#6a6ab4"></div>
<div class="abs" style="left:910.2px;top:196.1px;width:8.8px;height:1.4px;background:#ebc216"></div>
<div class="abs" style="left:910.2px;top:230.5px;width:8.8px;height:1.4px;background:#ebc216"></div>
<div class="abs" style="left:910.2px;top:276.4px;width:8.8px;height:1.3px;background:#c0a8ee"></div>
<div class="abs" style="left:910.2px;top:282.2px;width:8.8px;height:1.3px;background:#c0a8ee"></div>
<div class="abs" style="left:910.2px;top:310.7px;width:8.8px;height:1.4px;background:#ebc216"></div>
<div class="abs" style="left:910.2px;top:334.1px;width:8.8px;height:1.4px;background:#ebc216"></div>
<div class="abs" style="left:910.2px;top:351.3px;width:8.8px;height:1.4px;background:#ebc216"></div>
<svg class="ic" style="left:0;top:0" width="937" height="472" viewBox="0 0 937 472"><rect x="920" y="50.0" width="4" height="1.0" fill="#9db4ee"/><rect x="925.2" y="50.0" width="12" height="1.0" fill="#8a8a8a"/><rect x="920" y="53.6" width="3.4" height="1.2" fill="#9db4ee"/><rect x="924.2" y="53.6" width="13" height="1.2" fill="#a4a4a4"/><rect x="920" y="55.5" width="3.4" height="1.2" fill="#9db4ee"/><rect x="924.2" y="55.5" width="13" height="1.2" fill="#a4a4a4"/><rect x="920" y="57.3" width="3.4" height="1.2" fill="#9db4ee"/><rect x="924.2" y="57.3" width="13" height="1.2" fill="#a4a4a4"/><rect x="920" y="59.2" width="3.4" height="1.2" fill="#9db4ee"/><rect x="924.2" y="59.2" width="13" height="1.2" fill="#a4a4a4"/><rect x="920" y="61.0" width="3.4" height="1.2" fill="#9db4ee"/><rect x="924.2" y="61.0" width="13" height="1.2" fill="#a4a4a4"/><rect x="920" y="62.9" width="3.4" height="1.2" fill="#9db4ee"/><rect x="924.2" y="62.9" width="13" height="1.2" fill="#a4a4a4"/><rect x="920" y="65.5" width="3.4" height="1.2" fill="#9db4ee"/><rect x="924.2" y="65.5" width="13" height="1.2" fill="#a4a4a4"/><rect x="920" y="67.4" width="3.4" height="1.2" fill="#9db4ee"/><rect x="924.2" y="67.4" width="13" height="1.2" fill="#a4a4a4"/><rect x="920" y="69.2" width="3.4" height="1.2" fill="#9db4ee"/><rect x="924.2" y="69.2" width="13" height="1.2" fill="#a4a4a4"/><rect x="920" y="71.1" width="3.4" height="1.2" fill="#9db4ee"/><rect x="924.2" y="71.1" width="13" height="1.2" fill="#a4a4a4"/><rect x="920" y="72.9" width="3.4" height="1.2" fill="#9db4ee"/><rect x="924.2" y="72.9" width="13" height="1.2" fill="#a4a4a4"/><rect x="920" y="74.8" width="3.4" height="1.2" fill="#9db4ee"/><rect x="924.2" y="74.8" width="13" height="1.2" fill="#a4a4a4"/><rect x="920" y="78.8" width="3.8" height="0.8" fill="#9db4ee"/><rect x="924.6" y="78.8" width="12.4" height="0.8" fill="#b8b8b8"/><rect x="919.6" y="81.6" width="17.4" height="41.8" fill="#efefef"/><rect x="920.5" y="82.6" width="2" height="0.8" fill="#b0b0b0"/><rect x="923.5" y="82.6" width="2" height="0.8" fill="#b0b0b0"/><rect x="926.5" y="82.6" width="2" height="0.8" fill="#b0b0b0"/><rect x="929.5" y="82.6" width="6" height="0.8" fill="#c0c0c0"/><rect x="920" y="84.6" width="7.4" height="1.3" fill="#9db4ee"/><rect x="927.4" y="84.6" width="9.6" height="1.3" fill="#6f9cc4"/><rect x="923" y="88.4" width="3" height="1.4" fill="#9db4ee"/><rect x="927" y="88.4" width="3" height="1.4" fill="#9db4ee"/><rect x="931" y="88.4" width="6" height="1.4" fill="#a4a4a4"/><rect x="923" y="90.4" width="3" height="1.4" fill="#9db4ee"/><rect x="927" y="90.4" width="3" height="1.4" fill="#9db4ee"/><rect x="931" y="90.4" width="6" height="1.4" fill="#a4a4a4"/><rect x="923" y="92.4" width="3" height="1.4" fill="#9db4ee"/><rect x="927" y="92.4" width="3" height="1.4" fill="#9db4ee"/><rect x="931" y="92.4" width="6" height="1.4" fill="#a4a4a4"/><rect x="923" y="97.8" width="3" height="1.2" fill="#9db4ee"/><rect x="926.6" y="97.8" width="10.4" height="1.2" fill="#8a8a8a"/><rect x="928" y="100.2" width="1" height="1.1" fill="#9db4ee"/><rect x="929.6" y="100.2" width="7.4" height="1.1" fill="#a4a4a4"/><rect x="928" y="102.2" width="6" height="1.1" fill="#8a8a8a"/><rect x="935" y="102.2" width="2" height="1.1" fill="#a4a4a4"/><rect x="928" y="104.6" width="6" height="1.2" fill="#a4a4a4"/><rect x="925.2" y="106.8" width="3" height="1.2" fill="#9db4ee"/><rect x="928.6" y="106.8" width="6" height="1.2" fill="#a4a4a4"/><rect x="925.2" y="108.8" width="3" height="1.2" fill="#9db4ee"/><rect x="928.6" y="108.8" width="7" height="1.2" fill="#a4a4a4"/><rect x="925.2" y="110.8" width="3" height="1.2" fill="#9db4ee"/><rect x="928.6" y="110.8" width="5" height="1.2" fill="#a4a4a4"/><rect x="925.2" y="113.2" width="3" height="1.2" fill="#9db4ee"/><rect x="928.6" y="113.2" width="6" height="1.2" fill="#a4a4a4"/><rect x="922.6" y="116.0" width="1.2" height="1.0" fill="#a4a4a4"/><rect x="922.6" y="119.4" width="5" height="1.1" fill="#8a8a8a"/><rect x="922.6" y="121.4" width="3" height="1.1" fill="#9db4ee"/><rect x="926.2" y="121.4" width="10.8" height="1.1" fill="#a4a4a4"/><rect x="925.4" y="123.4" width="2.4" height="1.1" fill="#9db4ee"/><rect x="928" y="123.4" width="2" height="1.1" fill="#5f8fd8"/><rect x="930.4" y="123.4" width="6.6" height="1.1" fill="#a4a4a4"/><rect x="922.6" y="126.0" width="1" height="1.1" fill="#a4a4a4"/><rect x="922.8" y="129.0" width="1" height="1.1" fill="#a4a4a4"/><rect x="924.4" y="129.0" width="4" height="1.1" fill="#bcbcbc"/><rect x="929" y="129.0" width="3" height="1.1" fill="#bcbcbc"/><rect x="932.6" y="129.0" width="4" height="1.1" fill="#bcbcbc"/><rect x="922.6" y="130.8" width="5" height="1.1" fill="#8a8a8a"/><rect x="922.6" y="132.6" width="3" height="1.1" fill="#9db4ee"/><rect x="926.2" y="132.6" width="4" height="1.1" fill="#a4a4a4"/><rect x="931.2" y="132.6" width="5.8" height="1.1" fill="#a4a4a4"/><rect x="922.8" y="136.4" width="1" height="1.1" fill="#a4a4a4"/><rect x="924.4" y="136.4" width="4" height="1.1" fill="#bcbcbc"/><rect x="929" y="136.4" width="3" height="1.1" fill="#bcbcbc"/><rect x="932.6" y="136.4" width="4" height="1.1" fill="#bcbcbc"/><rect x="922.6" y="138.4" width="5" height="1.1" fill="#8a8a8a"/><rect x="922.6" y="140.2" width="3" height="1.1" fill="#9db4ee"/><rect x="926.2" y="140.2" width="10.8" height="1.1" fill="#a4a4a4"/><rect x="922.6" y="144.4" width="5" height="1.1" fill="#8a8a8a"/><rect x="922.6" y="146.4" width="3" height="1.1" fill="#9db4ee"/><rect x="926.2" y="146.4" width="10.8" height="1.1" fill="#a4a4a4"/><rect x="922.6" y="150.0" width="5" height="1.1" fill="#8a8a8a"/><rect x="922.6" y="152.0" width="3" height="1.1" fill="#9db4ee"/><rect x="926.2" y="152.0" width="10.8" height="1.1" fill="#a4a4a4"/><rect x="925.4" y="154.2" width="3" height="1.1" fill="#9db4ee"/><rect x="928.8" y="154.2" width="2" height="1.1" fill="#a4a4a4"/><rect x="925.4" y="156.0" width="3" height="1.1" fill="#9db4ee"/><rect x="930.4" y="157.8" width="4" height="1.1" fill="#a4a4a4"/><rect x="934.4" y="157.8" width="2.6" height="1.1" fill="#9fe09f"/><rect x="930.4" y="159.6" width="6.6" height="1.1" fill="#a4a4a4"/><rect x="922.6" y="161.8" width="1" height="1.1" fill="#a4a4a4"/><rect x="922.6" y="165.2" width="5" height="1.1" fill="#8a8a8a"/><rect x="922.6" y="167.2" width="3" height="1.1" fill="#9db4ee"/><rect x="926.2" y="167.2" width="10.8" height="1.1" fill="#a4a4a4"/><rect x="925.4" y="169.2" width="2.4" height="1.1" fill="#9db4ee"/><rect x="928" y="169.2" width="2" height="1.1" fill="#5f8fd8"/><rect x="930.4" y="169.2" width="6.6" height="1.1" fill="#a4a4a4"/><rect x="922.6" y="171.6" width="1" height="1.1" fill="#a4a4a4"/><rect x="920.2" y="173.2" width="1" height="1.1" fill="#a4a4a4"/></svg>
<div class="abs" style="left:0;top:470.8px;width:937px;height:1.2px;background:#cfcfcf"></div>
<div id="wm1">激活 Windows</div>
<div id="wm2">转到&ldquo;设置&rdquo;以激活 Windows。</div>
</body></html>
